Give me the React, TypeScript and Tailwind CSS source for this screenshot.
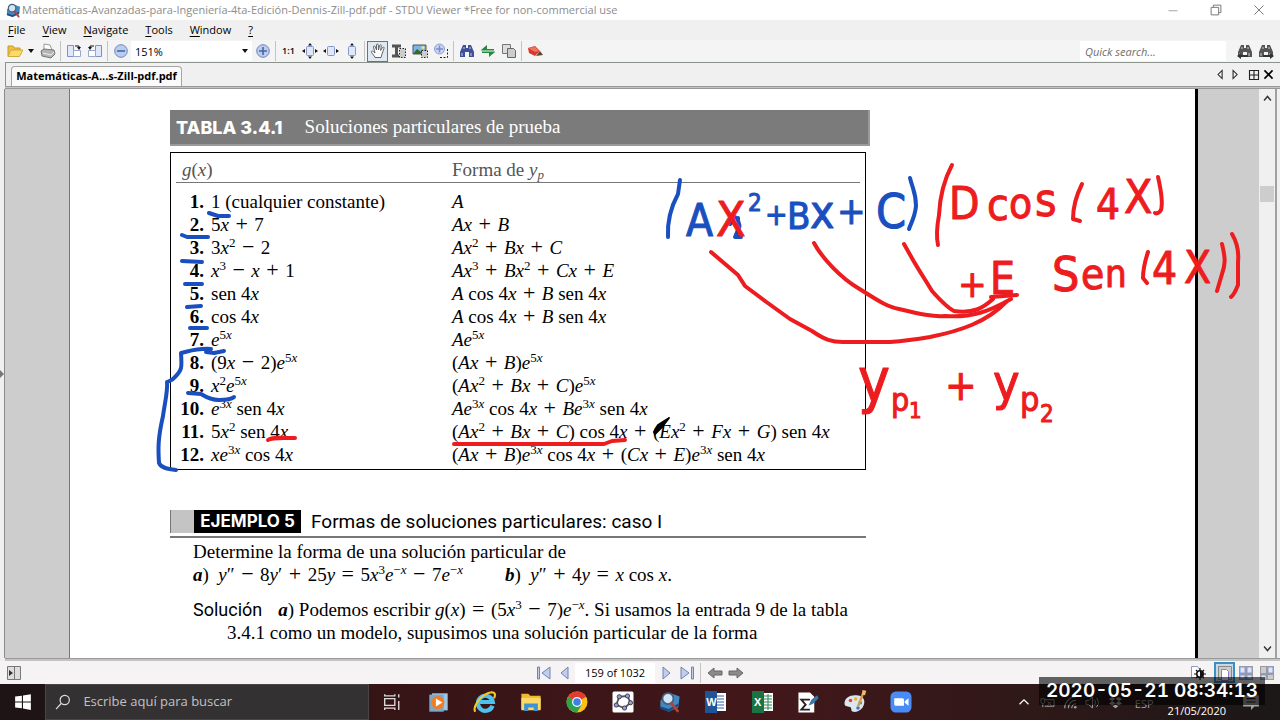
import type { ReactNode } from 'react';

const serif = "font-['Liberation_Serif',serif]";
const ui = "font-['Open_Sans','Noto_Sans',sans-serif]";

const entries = [
  { n: 1, g: '1 (cualquier constante)', y: 'A' },
  { n: 2, g: '5x + 7', y: 'Ax + B' },
  { n: 3, g: '3x^{2} − 2', y: 'Ax^{2} + Bx + C' },
  { n: 4, g: 'x^{3} − x + 1', y: 'Ax^{3} + Bx^{2} + Cx + E' },
  { n: 5, g: 'sen 4x', y: 'A cos 4x + B sen 4x' },
  { n: 6, g: 'cos 4x', y: 'A cos 4x + B sen 4x' },
  { n: 7, g: 'e^{5x}', y: 'Ae^{5x}' },
  { n: 8, g: '(9x − 2)e^{5x}', y: '(Ax + B)e^{5x}' },
  { n: 9, g: 'x^{2}e^{5x}', y: '(Ax^{2} + Bx + C)e^{5x}' },
  { n: 10, g: 'e^{3x} sen 4x', y: 'Ae^{3x} cos 4x + Be^{3x} sen 4x' },
  { n: 11, g: '5x^{2} sen 4x', y: '(Ax^{2} + Bx + C) cos 4x + (Ex^{2} + Fx + G) sen 4x' },
  { n: 12, g: 'xe^{3x} cos 4x', y: '(Ax + B)e^{3x} cos 4x + (Cx + E)e^{3x} sen 4x' },
];

// Variables go italic, words of three letters or more stay roman, ^{..} is raised
const Tex = ({ children }: { children: string }) => {
  const parts = children.match(/\^\{[^}]*\}|[A-Za-z]+| [+−=] |[^A-Za-z^+−= ]+|./g) ?? [];
  return (
    <>
      {parts.map((part, i) => {
        if (part.startsWith('^')) {
          return (
            <sup key={i} className="-top-[7px] text-[13px]">
              <Tex>{part.slice(2, -1)}</Tex>
            </sup>
          );
        }
        if (/^ [+−=] $/.test(part)) {
          return <span key={i} className="px-px text-[22px] leading-none">{part}</span>;
        }
        return /^[A-Za-z]{1,2}$/.test(part) ? <i key={i}>{part}</i> : part;
      })}
    </>
  );
};

const Icon = ({ size = 16, children }: { size?: number; children: ReactNode }) => (
  <svg width={size} height={size} viewBox="0 0 16 16" fill="none" aria-hidden="true">
    {children}
  </svg>
);

const ToolButton = ({ label, active, children }: { label: string; active?: boolean; children: ReactNode }) => (
  <button
    aria-label={label}
    className={`flex h-[21px] w-[21px] shrink-0 items-center justify-center ${
      active ? 'border border-[#3c7fb1] bg-[#dfe9f2]' : ''
    }`}
  >
    {children}
  </button>
);

const Separator = () => (
  <span className="flex h-5 w-[5px] shrink-0 justify-center">
    <span className="w-px bg-[#c4c4c4]" />
  </span>
);

const Caret = () => (
  <svg width="6" height="4" aria-hidden="true">
    <path d="M0 0h6L3 4z" fill="#111" />
  </svg>
);

const Magnifier = ({ size }: { size: number }) => (
  <Icon size={size}>
    <path d="M1 7 7 1l8 3-1 8-7 3-6-3z" fill="#3f8ac4" />
    <path d="m1 11 6 2 7-4v2l-7 4-6-2z" fill="#1e4a7c" />
    <circle cx="6.500" cy="5.500" r="4" fill="#cfe6f7" stroke="#4a5d78" strokeWidth="1.300" />
    <path d="m9 9 4.500 5.500" stroke="#b2423c" strokeWidth="2" strokeLinecap="round" />
  </Icon>
);

const Binoculars = ({ color, arrow }: { color: string; arrow?: 'left' | 'right' }) => (
  <Icon>
    <path d="M4 2h3v3h2V2h3l3 7v5h-5V9H6v5H1V9z" fill={color} />
    <path d="M3 10v3M12 10v3M5 4v2M11 4v2" stroke="#fff" strokeOpacity=".7" />
    {arrow === 'left' && <path d="M0 13l4-3v2h7v2H4v2z" fill="#333" />}
    {arrow === 'right' && <path d="M16 13l-4-3v2H5v2h7v2z" fill="#333" />}
  </Icon>
);

const ZoomSign = ({ plus }: { plus?: boolean }) => (
  <Icon>
    <circle cx="8" cy="8" r="6.300" fill="#b9cdf0" stroke="#6f88b8" />
    <path d={plus ? 'M4 8h8M8 4v8' : 'M4 8h8'} stroke="#4a669f" strokeWidth="1.600" />
  </Icon>
);

const FitPage = ({ h, v }: { h?: boolean; v?: boolean }) => (
  <Icon>
    <rect x="4.500" y="3.500" width="7" height="9" rx="1" fill="#dfe8fa" stroke="#8296c8" />
    {h && <path d="M0 8l3-2v4zM16 8l-3-2v4z" fill="#111" />}
    {v && <path d="M8 0l2 2.500H6zM8 16l2-2.500H6z" fill="#111" />}
  </Icon>
);

const TitleBar = () => (
  <header className="flex h-5 shrink-0 items-center bg-white pl-[6px] text-[#8c8c8c]">
    <Magnifier size={15} />
    <h1 className="ml-[1px] flex-1 truncate text-[11px]">
      Matemáticas-Avanzadas-para-Ingeniería-4ta-Edición-Dennis-Zill-pdf.pdf - STDU Viewer *Free for non-commercial use
    </h1>
    <div className="flex">
      <button aria-label="Minimizar" className="flex w-[43px] justify-center">
        <Icon size={12}><path d="M2 9h12" stroke="#888" /></Icon>
      </button>
      <button aria-label="Restaurar" className="flex w-[43px] justify-center">
        <Icon size={12}><path d="M1.500 4.500h10v10h-10zM4.500 4V1.500h10v10H12" stroke="#777" strokeWidth="1.300" /></Icon>
      </button>
      <button aria-label="Cerrar" className="flex w-[43px] justify-center">
        <Icon size={12}><path d="m2 2 12 12M14 2 2 14" stroke="#777" strokeWidth="1.300" /></Icon>
      </button>
    </div>
  </header>
);

const MenuBar = () => (
  <nav className="flex h-5 shrink-0 items-center gap-[17px] bg-[#f0f0f0] pl-2 text-[11px] text-black">
    {['File', 'View', 'Navigate', 'Tools', 'Window', '?'].map((item) => (
      <button key={item}>
        <span className="underline underline-offset-2">{item[0]}</span>
        {item.slice(1)}
      </button>
    ))}
  </nav>
);

const Toolbar = () => (
  <div className="flex h-[22px] shrink-0 items-center bg-[#f5f4f5] pl-1">
    <ToolButton label="Open">
      <Icon>
        <path d="M1 13V3h5l1.500 2H13v3" fill="#f0c040" stroke="#c89a2c" />
        <path d="M1 13.500 4 7h12l-3.500 6.500z" fill="#fbdc6a" stroke="#d3a93a" />
      </Icon>
    </ToolButton>
    <button aria-label="Recent files" className="flex w-3 justify-center"><Caret /></button>
    <ToolButton label="Print">
      <Icon>
        <path d="M4 7V1l6 1 2 5" fill="#fff" stroke="#999" />
        <path d="M1 8l3-2 10 1 1 4-4 4-9-2z" fill="#b4b4b4" stroke="#777" />
        <path d="m3 10 8 2 3-3" stroke="#eee" />
      </Icon>
    </ToolButton>
    <Separator />
    <ToolButton label="Rotate right">
      <Icon>
        <path d="M1.500 2.500h6v11h-6z" fill="#dfe8fa" stroke="#7c92c4" />
        <path d="M7.500 7.500h7v6h-7z" fill="#fff" stroke="#9aa8cc" />
        <path d="M9 3h4v2" stroke="#111" /><path d="M11 4h4l-2 3z" fill="#111" />
      </Icon>
    </ToolButton>
    <ToolButton label="Rotate left">
      <Icon>
        <path d="M8.500 2.500h6v11h-6z" fill="#dfe8fa" stroke="#7c92c4" />
        <path d="M1.500 7.500h7v6h-7z" fill="#fff" stroke="#9aa8cc" />
        <path d="M7 3H3v2" stroke="#111" /><path d="M1 4h4L3 7z" fill="#111" />
      </Icon>
    </ToolButton>
    <Separator />
    <ToolButton label="Zoom out"><ZoomSign /></ToolButton>
    <div className="flex w-[121px] shrink-0 items-center bg-white pr-1">
      <input aria-label="Zoom" defaultValue="151%" className="h-5 w-full min-w-0 bg-white pl-1 text-[11px] text-black" />
      <Caret />
    </div>
    <ToolButton label="Zoom in"><ZoomSign plus /></ToolButton>
    <Separator />
    <ToolButton label="Actual size"><span className="text-[9px] font-semibold text-black">1:1</span></ToolButton>
    <ToolButton label="Fit page"><FitPage h v /></ToolButton>
    <ToolButton label="Fit width"><FitPage h /></ToolButton>
    <ToolButton label="Fit height"><FitPage v /></ToolButton>
    <Separator />
    <ToolButton label="Hand tool" active>
      <Icon>
        <path
          d="M5 14 1.500 9.500c-.8-1.200.8-2 1.700-1L5 10 3.500 4c-.2-1.200 1.400-1.500 1.700-.4L6.500 7V2c0-1.200 1.700-1.200 1.800 0L8.500 7l1.200-4.600c.3-1.100 1.800-.7 1.600.4L10.600 7.500 12.500 4.500c.7-1 2-.2 1.500.8L12 11l-1 3.500H5z"
          fill="#fff"
          stroke="#555"
          strokeWidth=".9"
        />
      </Icon>
    </ToolButton>
    <ToolButton label="Select text">
      <Icon>
        <path d="M1 3h9M1 13h7M5.500 3v10" stroke="#555" strokeWidth="3" />
        <path d="M8.500 5.500h6v9h-6z" fill="#ccc" stroke="#222" strokeDasharray="1.500 1.500" />
      </Icon>
    </ToolButton>
    <ToolButton label="Select image">
      <Icon>
        <path d="M1 2h13v9H1z" fill="#7fb4e8" stroke="#555" />
        <path d="m1 11 4-5 4 3 2-1 3 3z" fill="#2c6e2f" /><circle cx="11" cy="4.500" r="1.500" fill="#ffe36e" />
        <path d="M9.500 7.500h6v7h-6z" fill="#ccc" stroke="#222" strokeDasharray="1.500 1.500" />
      </Icon>
    </ToolButton>
    <ToolButton label="Zoom to area">
      <Icon>
        <circle cx="6.500" cy="6" r="5" fill="#c9d5f4" stroke="#8c9cd0" />
        <path d="M3 6h7M6.500 2.500v7" stroke="#7c8dc8" strokeWidth="1.500" />
        <path d="M14.500 6v8.500H6" stroke="#222" strokeDasharray="2 1.500" />
      </Icon>
    </ToolButton>
    <Separator />
    <ToolButton label="Find"><Binoculars color="#3f4f9a" /></ToolButton>
    <ToolButton label="Go to page">
      <Icon><path d="M1 7.500h13V6H7V2L1 7zM15 8.500H2V10h7v4l6-5z" fill="#1f8b3b" /></Icon>
    </ToolButton>
    <ToolButton label="Copy">
      <Icon>
        <path d="M1.500 1.500h8v9h-8z" fill="#ddd" stroke="#777" />
        <path d="M6.500 5.500h6l2 2v7h-8z" fill="#ccc" stroke="#666" />
      </Icon>
    </ToolButton>
    <Separator />
    <ToolButton label="Bookmarks">
      <Icon>
        <path d="m1 5 7-2 5 5-5 5-6-3z" fill="#d63a2c" />
        <path d="m1 5 7-1 4 4-4 1z" fill="#ef7466" /><path d="m9 13 4-5 3 4z" fill="#5d4630" />
      </Icon>
    </ToolButton>
    <div className="flex-1" />
    <input
      aria-label="Quick search"
      placeholder="Quick search..."
      className="h-5 w-[146px] bg-white pl-[5px] text-[11px] text-black italic placeholder:text-[#6d6d6d]"
    />
    <button aria-label="Find previous" className="ml-2 flex w-[21px] justify-center">
      <Binoculars color="#555" arrow="left" />
    </button>
    <button aria-label="Find next" className="mr-1 flex w-[21px] justify-center">
      <Binoculars color="#555" arrow="right" />
    </button>
  </div>
);

const TabBar = () => (
  <div className="ml-[5px] flex h-[24px] shrink-0 items-end border-t border-l border-[#8c938c] bg-[#f0f0f0] pl-[5px]">
    <button className="h-5 w-[171px] rounded-t-[4px] border border-b-0 border-[#a5a5a5] bg-[#fafafa] text-[11px] font-bold text-black">
      Matemáticas-A...s-Zill-pdf.pdf
    </button>
    <div className="flex-1" />
    <div className="flex items-center gap-[2px] self-center pr-[5px]">
      <button aria-label="Previous tab"><Icon size={13}><path d="M10 3v10L5 8z" stroke="#222" strokeWidth="1.300" /></Icon></button>
      <button aria-label="Next tab"><Icon size={13}><path d="M5 3v10l5-5z" stroke="#222" strokeWidth="1.300" /></Icon></button>
      <button aria-label="Tab list" className="ml-1"><Icon size={12}><path d="M2 2h12v12H2zM8 2v12M2 8h12" stroke="#222" strokeWidth="1.500" /></Icon></button>
      <button aria-label="Close tab"><Icon size={13}><path d="m3 3 10 10M13 3 3 13" stroke="#000" strokeWidth="2" /></Icon></button>
    </div>
  </div>
);

const blueLetters = [
  { t: 'A', x: 686, y: 236, s: 44 },
  { t: '2', x: 748, y: 211, s: 24 },
  { t: '+', x: 765, y: 225, s: 30 },
  { t: 'B', x: 787, y: 229, s: 38 },
  { t: 'x', x: 810, y: 228, s: 46 },
  { t: '+', x: 837, y: 224, s: 38 },
  { t: 'C', x: 876, y: 228, s: 48 },
];

const redLetters = [
  { t: 'X', x: 716, y: 236, s: 48 },
  { t: 'D', x: 949, y: 219, s: 44 },
  { t: 'c', x: 987, y: 220, s: 44 },
  { t: 'o', x: 1009, y: 218, s: 42 },
  { t: 's', x: 1035, y: 216, s: 46 },
  { t: '4', x: 1096, y: 219, s: 42 },
  { t: 'X', x: 1124, y: 213, s: 46 },
  { t: '+', x: 958, y: 297, s: 38 },
  { t: 'E', x: 990, y: 294, s: 44 },
  { t: 'S', x: 1052, y: 291, s: 48 },
  { t: 'e', x: 1081, y: 289, s: 42 },
  { t: 'n', x: 1105, y: 287, s: 38 },
  { t: '4', x: 1152, y: 284, s: 44 },
  { t: 'X', x: 1184, y: 283, s: 44 },
  { t: 'y', x: 858, y: 401, s: 60 },
  { t: 'p', x: 891, y: 411, s: 32 },
  { t: '1', x: 909, y: 418, s: 22 },
  { t: '+', x: 945, y: 400, s: 42 },
  { t: 'y', x: 993, y: 400, s: 50 },
  { t: 'p', x: 1020, y: 411, s: 34 },
  { t: '2', x: 1040, y: 422, s: 24 },
];

// Pen marks drawn by the teacher on top of the document
const Ink = () => (
  <svg
    className="pointer-events-none absolute top-0 left-0"
    width="1262"
    height="569"
    viewBox="0 89 1262 569"
    fill="none"
    strokeWidth="4"
    strokeLinecap="round"
    strokeLinejoin="round"
  >
    <g stroke="#1a4fbf">
      <path d="M680 180 678 194C672 205 667 218 668 237" />
      <path d="M910 178C913 190 916 193 916 206 915 217 911 223 909 229" />
      <path d="M735 217 730 224M738 218C737 224 742 224 738 230L735 237 741 237" />
      <path d="M209 213 218 216 229 216M182 235 187 237 208 237M182 261 202 262M185 284H202M187 307 201 306M190 328H207" />
      <path d="M224 351 214 353 206 352M211 349C198 348 190 351 181 353 182 368 182 370 175 377 172 381 169 381 167 382 168 390 165 402 163 416 158 438 158 448 159 463 161 468 168 469 176 470" />
      <path d="M188 393 201 394C209 399 213 400 219 400 228 400 232 399 234 397" />
    </g>
    <g stroke="#ed1c1f">
      <path d="M952 165C945 178 940 195 939 215 937 226 936 236 938 245" />
      <path d="M1082 184C1075 198 1073 207 1073 219L1080 221" />
      <path d="M1158 177C1161 190 1163 203 1161 210 1159 213 1157 214 1155 213" />
      <path d="M1148 252C1144 264 1143 270 1143 278L1147 283" />
      <path d="M1222 244C1226 260 1225 265 1222 274L1217 291" />
      <path d="M1232 234C1238 244 1239 252 1238 262V285C1236 290 1234 295 1231 297" />
      <path d="M711 252 738 275 745 286 765 301 790 319 812 331C825 340 832 342 843 342L890 342C903 341 918 339 930 337 960 331 987 322 1006 302" />
      <path d="M814 243C822 258 841 278 858 288 877 300 887 307 899 309 920 314 933 317 945 316 972 318 990 311 1011 299" />
      <path d="M904 244 913 260C920 272 926 281 932 291 940 300 948 308 954 311 973 314 983 308 993 299" />
      <path d="M991 297 1017 295" />
      <path d="M268 440C272 437 282 438 295 438" />
      <path d="M454 444H604L612 441 625 440" />
    </g>
    <g fill="#1a4fbf" stroke="#1a4fbf" strokeWidth="1" className="font-['DejaVu_Sans_Condensed','DejaVu_Sans',sans-serif]">
      {blueLetters.map((l) => (
        <text key={l.x} x={l.x} y={l.y} fontSize={l.s}>{l.t}</text>
      ))}
    </g>
    <g fill="#ed1c1f" stroke="#ed1c1f" strokeWidth="1" className="font-['DejaVu_Sans_Condensed','DejaVu_Sans',sans-serif]">
      {redLetters.map((l) => (
        <text key={l.x} x={l.x} y={l.y} fontSize={l.s}>{l.t}</text>
      ))}
    </g>
    <path d="m654 432 4-7 11-7-7 9-7 7z" fill="#000" stroke="#000" strokeWidth="2" />
  </svg>
);

const SolutionsTable = () => (
  <section className="w-[700px]">
    <h2 className="flex h-9 items-center gap-[22px] border-r-2 border-b-2 border-[#9a9a9a] bg-[#7b7b7b] pl-[6px] text-white">
      <span className="font-['Inter',sans-serif] text-[18px] font-extrabold">TABLA 3.4.1</span>
      <span className="text-[19px]">Soluciones particulares de prueba</span>
    </h2>
    <div className="mt-[6px] mr-1 h-[318px] border border-black px-[5px]">
      <table className="w-full text-[19px] leading-[23px] text-black">
        <thead>
          <tr className="border-b border-[#777] text-left text-[#555]">
            <th className="h-[29px] w-[276px] pt-1 pl-[6px] font-normal"><i>g</i>(<i>x</i>)</th>
            <th className="pt-1 font-normal">Forma de <i>y<sub className="text-[13px]">p</sub></i></th>
          </tr>
        </thead>
        <tbody>
          <tr aria-hidden="true"><td className="h-2" /></tr>
          {entries.map((e) => (
            <tr key={e.n}>
              <td className="p-0">
                <span className="mr-[7px] inline-block w-7 text-right font-bold">{e.n}.</span>
                <Tex>{e.g}</Tex>
              </td>
              <td className="p-0"><Tex>{e.y}</Tex></td>
            </tr>
          ))}
        </tbody>
      </table>
    </div>
  </section>
);

const Example = () => (
  <section className="mt-[40px] w-[696px] text-[19px] leading-[23px] text-black">
    <h2 className="flex h-7 items-start border-b-2 border-[#777]">
      <span className="h-[23px] w-6 border-l border-[#777] bg-[#c4c4c4]" />
      <span className="h-[23px] w-[107px] bg-black text-center font-['Inter',sans-serif] text-[17px] font-bold text-white">
        EJEMPLO 5
      </span>
      <span className="ml-[10px] font-['Roboto',sans-serif] text-[19px]">Formas de soluciones particulares: caso I</span>
    </h2>
    <div className="pt-[2px] pl-[23px]">
      <p>Determine la forma de una solución particular de</p>
      <p className="flex gap-[42px]">
        <span><b><i>a</i></b>)&ensp;<Tex>{'y″ − 8y′ + 25y = 5x^{3}e^{−x} − 7e^{−x}'}</Tex></span>
        <span><b><i>b</i></b>)&ensp;<Tex>{'y″ + 4y = x cos x.'}</Tex></span>
      </p>
      <p className="mt-3">
        <span className="mr-4 font-['Roboto',sans-serif] text-[18px]">Solución</span>
        <b><i>a</i></b>) Podemos escribir <Tex>{'g(x) = (5x^{3} − 7)e^{−x}.'}</Tex> Si usamos la entrada 9 de la tabla
      </p>
      <p className="pl-[34px]">3.4.1 como un modelo, supusimos una solución particular de la forma</p>
    </div>
  </section>
);

const Viewer = () => (
  <main className="relative flex min-h-0 flex-1 overflow-hidden bg-[#cdcdcd]">
    <div className="flex w-[70px] shrink-0 items-center border-r border-[#777]">
      <span className="flex h-full w-[5px] items-center border-r border-[#8a8a8a] bg-[#f0f0f0]">
        <svg width="4" height="8" aria-hidden="true"><path d="M0 0l4 4-4 4z" fill="#777" /></svg>
      </span>
    </div>
    <article className={`min-w-0 flex-1 border-r-3 border-black bg-white pt-[21px] pl-[100px] whitespace-nowrap ${serif}`}>
      <SolutionsTable />
      <Example />
    </article>
    <div className="w-[61px] shrink-0" />
    <div className="flex w-4 shrink-0 flex-col items-center justify-between bg-[#f0f0f0] py-1">
      <button aria-label="Scroll up"><Icon size={11}><path d="m3 11 5-6 5 6" stroke="#333" strokeWidth="2" /></Icon></button>
      <div className="mb-[360px] h-4 w-[14px] bg-[#cdcdcd]" />
      <button aria-label="Scroll down"><Icon size={11}><path d="m3 5 5 6 5-6" stroke="#333" strokeWidth="2" /></Icon></button>
    </div>
    <div className="w-[5px] shrink-0 border-l-2 border-[#a0a0a0] bg-[#f0f0f0]" />
    <Ink />
  </main>
);

const NavIcon = ({ d }: { d: string }) => (
  <Icon><path d={d} fill="#c3cdea" stroke="#7182b4" /></Icon>
);

const StatusBar = () => (
  <div className="flex h-[23px] shrink-0 items-center bg-[#f5f3f4] pl-[6px]">
    <button aria-label="Side panel">
      <Icon><path d="M1.500 1.500h13v13h-13z" fill="#ddd" stroke="#777" /><path d="M8.500 2v12" stroke="#777" /><path d="m3 5 4 3-4 3z" fill="#333" /></Icon>
    </button>
    <div className="flex flex-1 items-center pl-[511px]">
      <button aria-label="First page" className="flex w-[21px] justify-center"><NavIcon d="M1.500 2h2v12h-2zM14 2v12L6 8z" /></button>
      <button aria-label="Previous page" className="flex w-[21px] justify-center"><NavIcon d="M11 2v12L4 8z" /></button>
      <input aria-label="Page" defaultValue="159 of 1032" className="h-5 w-20 bg-white text-center text-[11px] text-black" />
      <button aria-label="Next page" className="flex w-[21px] justify-center"><NavIcon d="M5 2v12l7-6z" /></button>
      <button aria-label="Last page" className="flex w-[21px] justify-center"><NavIcon d="M2 2v12l8-6zM12.500 2h2v12h-2z" /></button>
      <span className="mx-[3px] h-5 w-px bg-[#c4c4c4]" />
      <button aria-label="Back" className="flex w-[21px] justify-center"><Icon><path d="m1 8 6-5v3h8v4H7v3z" fill="#8b8b8b" stroke="#666" /></Icon></button>
      <button aria-label="Forward" className="flex w-[21px] justify-center"><Icon><path d="m15 8-6-5v3H1v4h8v3z" fill="#8b8b8b" stroke="#666" /></Icon></button>
    </div>
    <div className="flex items-center pr-[3px]">
      <button aria-label="Contrast" className="mr-2">
        <Icon>
          <path d="M1.500 1.500h6l2 3v8h-8z" fill="#fff" stroke="#8a9cc8" />
          <circle cx="10" cy="9" r="4" fill="#111" />
          <path d="M10 3v12M4 9h12M6 5l8 8M14 5l-8 8" stroke="#111" strokeWidth="1.200" /><path d="M10 6.500a2.500 2.500 0 0 0 0 5z" fill="#fff" />
        </Icon>
      </button>
      <button aria-label="Single page" className="flex h-[21px] w-[21px] items-center justify-center border-2 border-[#3c8fc0] bg-[#c9d8e6]">
        <Icon><path d="M1.500 1.500h13v13h-13z" fill="#ccc" stroke="#888" /><path d="M4.500 4.500h5l2 2v9h-7z" fill="#fff" stroke="#8a7cc0" /></Icon>
      </button>
      <button aria-label="Facing pages" className="flex w-[21px] justify-center">
        <Icon><path d="M1 1h14v14H1z" fill="#9a9a9a" /><path d="M2 2h5v6H2zM9 2h5v6H9zM2 10h5v4H2zM9 10h5v4H9z" fill="#dfe5fa" stroke="#8d9bd0" /></Icon>
      </button>
      <button aria-label="Book view" className="flex w-[21px] justify-center">
        <Icon><path d="M1 1h14v14H1z" fill="#9a9a9a" /><path d="M9 2h5v6H9zM2 10h5v4H2z" fill="#dfe5fa" stroke="#8d9bd0" /><path d="M2 2h5v6H2zM9 10h5v4H9z" fill="#ccc" /></Icon>
      </button>
    </div>
  </div>
);

const apps: { name: string; icon: ReactNode }[] = [
  { name: 'Vista de tareas', icon: <Icon size={18}><path d="M1.500 5h9v6h-9zM1.500 1v1.500h9V1M1.500 15v-1.500h9V15M14 1v3M14 7v8" stroke="#ddd" strokeWidth="1.200" /></Icon> },
  {
    name: 'Reproductor',
    icon: <Icon size={21}><path d="M3 1h12v13H3z" fill="#9cc7e4" /><path d="M1 2h11v13H1z" fill="#7aa8cb" /><circle cx="7.500" cy="8" r="5" fill="#f07d24" /><path d="m6 5 5 3-5 3z" fill="#fff" /></Icon>,
  },
  {
    name: 'Internet Explorer',
    icon: (
      <Icon size={24}>
        <path d="M13 10.500A5 5 0 1 1 13.200 8H4.500" stroke="#4ec1ee" strokeWidth="2.800" />
        <path d="M1.500 14.500C-.5 11 6 2 12.500 1.500c2.500 0 2.500 2 1.500 4" stroke="#f3c72d" strokeWidth="1.400" />
      </Icon>
    ),
  },
  {
    name: 'Explorador de archivos',
    icon: <Icon size={22}><path d="M1 2h5l1.500 1.500H15V13H1z" fill="#f2b92c" /><path d="M1 5h14v9H1z" fill="#fbd969" /><path d="M3 14.500V9h10v5.500h-3V12H6v2.500z" fill="#3f93d3" /></Icon>,
  },
  {
    name: 'Chrome',
    icon: (
      <Icon size={24}>
        <circle cx="8" cy="8" r="7" fill="#fbc116" />
        <path d="M8 8 1.940 4.500A7 7 0 0 1 14.060 4.500z" fill="#e33b2e" /><path d="M8 1a7 7 0 0 1 6.060 3.500H8z" fill="#e33b2e" />
        <path d="M8 8 1.940 4.500A7 7 0 0 0 8 15l3-5z" fill="#2ba24c" />
        <circle cx="8" cy="8" r="3.300" fill="#fff" /><circle cx="8" cy="8" r="2.500" fill="#3f7fe8" />
      </Icon>
    ),
  },
  {
    name: 'GeoGebra',
    icon: (
      <Icon size={24}>
        <rect x="1" y="1" width="14" height="14" rx="1" fill="#fff" />
        <path d="M5.500 4.500 11 4l2 4.500-4 3.500-5.500-2z" stroke="#555" strokeWidth="1.200" />
        {[[5.5, 4.5], [11, 4], [13, 8.5], [9, 12], [3.5, 10]].map(([cx, cy]) => (
          <circle key={cx} cx={cx} cy={cy} r="1.400" fill="#9999e8" stroke="#333" strokeWidth=".6" />
        ))}
      </Icon>
    ),
  },
  { name: 'STDU Viewer', icon: <Magnifier size={22} /> },
  {
    name: 'Word',
    icon: (
      <span className="flex items-center">
        <span className="flex h-[22px] w-3 items-center justify-center bg-[#1f5499] font-['Liberation_Sans',sans-serif] text-[11px] font-bold text-white">W</span>
        <svg width="9" height="18" aria-hidden="true"><path d="M0 0h9v18H0z" fill="#fff" /><path d="M0 3h7M0 6h7M0 9h7M0 12h7M0 15h7" stroke="#2b62ab" /></svg>
      </span>
    ),
  },
  {
    name: 'Excel',
    icon: (
      <span className="flex items-center">
        <span className="flex h-[22px] w-3 items-center justify-center bg-[#1b7343] font-['Liberation_Sans',sans-serif] text-[11px] font-bold text-white">X</span>
        <svg width="9" height="18" aria-hidden="true"><path d="M0 0h9v18H0z" fill="#fff" /><path d="M0 3h8M0 6h8M0 9h8M0 12h8M0 15h8M4 1v16" stroke="#2b8753" /></svg>
      </span>
    ),
  },
  {
    name: 'Editor de ecuaciones',
    icon: (
      <Icon size={23}>
        <path d="M1 1h8l3 3v11H1z" fill="#fff" /><path d="M9 6H3l3 3.500L3 13h6" stroke="#222" strokeWidth="1.300" />
        <path d="m8 10 2-4 4-3 1 2-4 4z" fill="#3577b5" />
      </Icon>
    ),
  },
  {
    name: 'Paint',
    icon: (
      <Icon size={24}>
        <path d="M1 9c0-4 4-6 8-5.500 4 0 6 3 5 6-1 4-5 5.500-7 5-2 0-1-2-2-3-1-.8-4 0-4-2.500z" fill="#dbe7ef" />
        <circle cx="5" cy="7" r="1.200" fill="#d9473c" /><circle cx="8.500" cy="6" r="1.200" fill="#e7b52d" /><circle cx="11.500" cy="8.500" r="1.200" fill="#3b9c56" /><circle cx="10" cy="12" r="1.200" fill="#3c76cf" />
        <path d="m10 11 3.500-9" stroke="#d69a4c" strokeWidth="1.500" /><path d="M12.500 3 13 0l2.500.5-.8 3z" fill="#e9bb6c" />
      </Icon>
    ),
  },
  {
    name: 'Zoom',
    icon: <Icon size={24}><rect x="1" y="1" width="14" height="14" rx="3.500" fill="#4a8cf7" /><path d="M3.500 5.500H9a1 1 0 0 1 1 1v4H4.500a1 1 0 0 1-1-1zM10.500 7.500l2.500-2v5l-2.500-2z" fill="#fff" /></Icon>,
  },
];

const Taskbar = () => (
  <footer className="relative flex h-9 shrink-0 bg-linear-to-r from-[#2a1113] via-[#42171a] via-60% to-[#1c1717]">
    <button aria-label="Inicio" className="flex w-[45px] items-center justify-center bg-[#1f1415]">
      <Icon size={18}><path d="M1 3.200 7 2.400v5.200H1zM8 2.200 15 1v6.600H8zM1 8.400h6v5.200l-6-.8zM8 8.400h7V15l-7-1.200z" fill="#fff" /></Icon>
    </button>
    <label className="flex w-[324px] items-center gap-3 border border-[#4a4445] bg-[#333132] pl-[9px]">
      <Icon size={18}><circle cx="9.500" cy="6" r="4.500" stroke="#ddd" strokeWidth="1.200" /><path d="M6 9.500 1 15" stroke="#ddd" strokeWidth="1.200" /></Icon>
      <input
        aria-label="Buscar"
        placeholder="Escribe aquí para buscar"
        className="w-full bg-transparent text-[13px] text-white placeholder:text-[#c4c2c2]"
      />
    </label>
    <div className="flex w-[555px]">
      {apps.map((app) => (
        <button key={app.name} aria-label={app.name} className="flex flex-1 items-center justify-center">
          {app.icon}
        </button>
      ))}
    </div>
    <div className="flex flex-1 items-center justify-end pr-5 text-[#a5a2a3]">
      <button aria-label="Mostrar iconos ocultos" className="mr-[10px]"><Icon size={12}><path d="m2 11 6-6 6 6" stroke="#fff" strokeWidth="1.600" /></Icon></button>
      <div className="flex items-center gap-2">
        <Icon size={15}><path d="M5 5h10v7H5M1 4v3c0 3 4 3 4 0V4zM3 9v4M8 7l4 4M12 7l-4 4" stroke="currentColor" /></Icon>
        <Icon size={14}><path d="M2 15A13 13 0 0 1 15 2M6 15a9 9 0 0 1 9-9M10 15a5 5 0 0 1 5-5" stroke="currentColor" strokeWidth="1.300" /><circle cx="14" cy="14" r="1.500" fill="currentColor" /></Icon>
        <Icon size={15}><path d="M1 6h3l4-4v12l-4-4H1zM10 5c1.500 2 1.500 4 0 6M12 3c3 3 3 7 0 10" stroke="currentColor" /></Icon>
        <Icon size={15}><path d="m4.500 2 3.500 2-3.500 2.500L1 4.500zM11.500 2 15 4.500l-3.500 2L8 4zM1 9l3.500-2.500L8 9l-3.500 2zM15 9l-3.500-2.500L8 9l3.500 2zM5 12l3-2 3 2-3 2z" fill="currentColor" /></Icon>
      </div>
      <span className="mt-1 ml-3 text-[11px] leading-3">ESP</span>
      <time className="mx-[14px] mt-[18px] text-[11px] leading-4 text-white">21/05/2020</time>
      <button aria-label="Notificaciones" className="ml-[2px]"><Icon size={18}><path d="M1 2h14v10h-4l-3 3v-3H1z" fill="currentColor" /><path d="M4 5h8M4 8h8" stroke="#222" /></Icon></button>
    </div>
    <div className="absolute -top-[7px] right-[15px] flex h-7 w-[226px] items-center justify-center bg-black/60 font-['Inter',sans-serif] text-[19px] leading-5 font-semibold tabular-nums whitespace-nowrap text-white">
      2020-05-21 08:34:13
    </div>
  </footer>
);

const App = () => (
  <div className={`flex h-screen flex-col bg-[#f0f0f0] ${ui}`}>
    <TitleBar />
    <MenuBar />
    <Toolbar />
    <TabBar />
    <div className="ml-[5px] h-[3px] shrink-0 border-y border-[#999] bg-[#c4c4c4]" />
    <Viewer />
    <div className="ml-[5px] h-[3px] shrink-0 border-t border-[#999] bg-[#c4c4c4]" />
    <StatusBar />
    <Taskbar />
  </div>
);

export default App;
